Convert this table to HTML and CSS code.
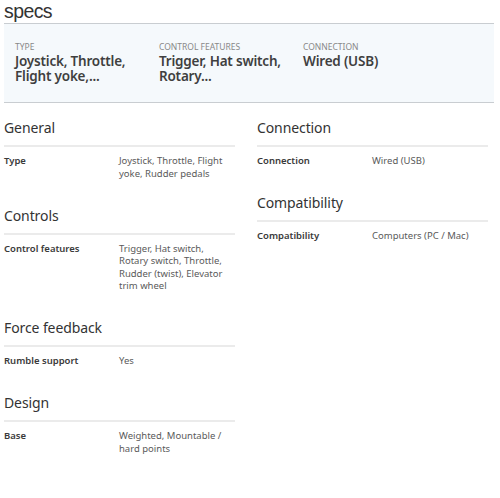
FILE: index.html
```html
<!DOCTYPE html>
<html>
<head>
<meta charset="utf-8">
<link rel="stylesheet" href="styles.css">
</head>
<body>
<div class="page">
  <h1 class="title">specs</h1>
  <div class="summary">
    <div class="sum-item">
      <div class="sum-label">TYPE</div>
      <div class="sum-value">Joystick, Throttle, Flight yoke,...</div>
    </div>
    <div class="sum-item">
      <div class="sum-label">CONTROL FEATURES</div>
      <div class="sum-value">Trigger, Hat switch, Rotary...</div>
    </div>
    <div class="sum-item">
      <div class="sum-label">CONNECTION</div>
      <div class="sum-value">Wired (USB)</div>
    </div>
  </div>
  <div class="cols">
    <div class="col">
      <section class="group">
        <h2 class="group-title">General</h2>
        <div class="row"><div class="label">Type</div><div class="value">Joystick, Throttle, Flight yoke, Rudder pedals</div></div>
      </section>
      <section class="group">
        <h2 class="group-title">Controls</h2>
        <div class="row"><div class="label">Control features</div><div class="value">Trigger, Hat switch, Rotary switch, Throttle, Rudder (twist), Elevator trim wheel</div></div>
      </section>
      <section class="group">
        <h2 class="group-title">Force feedback</h2>
        <div class="row"><div class="label">Rumble support</div><div class="value">Yes</div></div>
      </section>
      <section class="group">
        <h2 class="group-title">Design</h2>
        <div class="row"><div class="label">Base</div><div class="value">Weighted, Mountable / hard points</div></div>
      </section>
    </div>
    <div class="col">
      <section class="group">
        <h2 class="group-title">Connection</h2>
        <div class="row"><div class="label">Connection</div><div class="value">Wired (USB)</div></div>
      </section>
      <section class="group">
        <h2 class="group-title">Compatibility</h2>
        <div class="row"><div class="label">Compatibility</div><div class="value">Computers (PC / Mac)</div></div>
      </section>
    </div>
  </div>
</div>
</body>
</html>
```
FILE: styles.css
```css
html, body {
  margin: 0;
  padding: 0;
  background: #ffffff;
}
body {
  font-family: "Noto Sans", "Open Sans", sans-serif;
  color: #333333;
}
.page {
  padding: 0 6px 0 4px;
}
.title {
  margin: 0;
  font-family: "Liberation Sans", Arial, sans-serif;
  font-size: 19.5px;
  font-weight: 400;
  line-height: 23px;
  color: #333;
  letter-spacing: -0.6px;
}
.summary {
  display: flex;
  background: #f5f9fc;
  border-top: 1px solid #c9cdd1;
  border-bottom: 1px solid #c9cdd1;
  padding: 17px 11px 0;
  height: 61px;
}
.sum-item {
  width: 144px;
}
.sum-label {
  font-size: 8.5px;
  line-height: 12px;
  color: #888;
  text-transform: uppercase;
}
.sum-value {
  width: 130px;
  margin-top: 1px;
  font-size: 13.5px;
  line-height: 14.5px;
  font-weight: 600;
  color: #3f3f3f;
  letter-spacing: -0.2px;
}
.cols {
  display: grid;
  grid-template-columns: 231px 231px;
  column-gap: 22px;
  padding-top: 16px;
}
.group {
  margin-bottom: 26.5px;
}
.group-title {
  margin: 0;
  font-size: 14px;
  font-weight: 400;
  line-height: 18px;
  padding-bottom: 8px;
  border-bottom: 2px solid #ebebeb;
  color: #333;
  letter-spacing: -0.1px;
}
.row {
  display: flex;
  padding-top: 8px;
  font-size: 9.5px;
  line-height: 12.5px;
}
.label {
  width: 115px;
  flex: none;
  font-weight: 600;
  color: #3a3a3a;
}
.value {
  flex: 1;
  color: #5a5a5a;
  padding-right: 10px;
}
```
